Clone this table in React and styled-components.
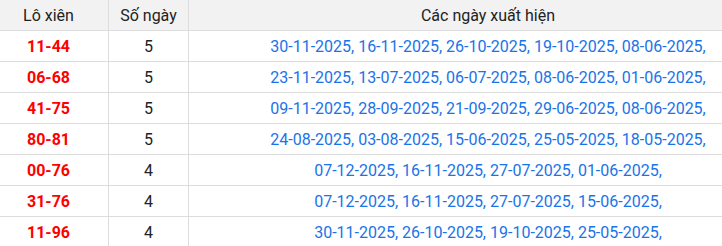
import styled, { createGlobalStyle } from "styled-components";

const rows = [
  { pair: "11-44", count: 5, dates: "30-11-2025, 16-11-2025, 26-10-2025, 19-10-2025, 08-06-2025," },
  { pair: "06-68", count: 5, dates: "23-11-2025, 13-07-2025, 06-07-2025, 08-06-2025, 01-06-2025," },
  { pair: "41-75", count: 5, dates: "09-11-2025, 28-09-2025, 21-09-2025, 29-06-2025, 08-06-2025," },
  { pair: "80-81", count: 5, dates: "24-08-2025, 03-08-2025, 15-06-2025, 25-05-2025, 18-05-2025," },
  { pair: "00-76", count: 4, dates: "07-12-2025, 16-11-2025, 27-07-2025, 01-06-2025," },
  { pair: "31-76", count: 4, dates: "07-12-2025, 16-11-2025, 27-07-2025, 15-06-2025," },
  { pair: "11-96", count: 4, dates: "30-11-2025, 26-10-2025, 19-10-2025, 25-05-2025," },
];

export default function App() {
  return (
    <>
      <GlobalStyle />
      <Viewport>
        <Table>
          <colgroup>
            <col style={{ width: 120 }} />
            <col style={{ width: 80 }} />
            <col />
          </colgroup>
          <thead>
            <tr>
              <HeadCell>Lô xiên</HeadCell>
              <HeadCell>Số ngày</HeadCell>
              <HeadCell>Các ngày xuất hiện</HeadCell>
            </tr>
          </thead>
          <tbody>
            {rows.map((row) => (
              <tr key={row.pair}>
                <Cell $variant="pair">{row.pair}</Cell>
                <Cell>{row.count}</Cell>
                <Cell $variant="dates">{row.dates}</Cell>
              </tr>
            ))}
          </tbody>
        </Table>
      </Viewport>
    </>
  );
}

const GlobalStyle = createGlobalStyle`
  body {
    margin: 0;
    background: #ffffff;
    font-family: Roboto, "Liberation Sans", Arial, sans-serif;
  }
`;

const Viewport = styled.div`
  width: 722px;
  overflow: hidden;
`;

const Table = styled.table`
  width: 800px;
  margin-left: -12px;
  border-collapse: collapse;
  table-layout: fixed;
  font-size: 16px;
`;

const HeadCell = styled.th`
  height: 30px;
  padding: 0;
  background: #f2f2f2;
  border: 1px solid #dddddd;
  border-top: none;
  font-weight: 400;
  color: #222222;
  text-align: center;
  white-space: nowrap;
`;

const colors = {
  pair: "#ff0000",
  dates: "#1a73e8",
};

const Cell = styled.td`
  height: 30px;
  padding: 0;
  border: 1px solid #dddddd;
  text-align: center;
  white-space: nowrap;
  color: ${({ $variant }) => colors[$variant] || "#222222"};
  font-weight: ${({ $variant }) => ($variant === "pair" ? 700 : 400)};
`;
